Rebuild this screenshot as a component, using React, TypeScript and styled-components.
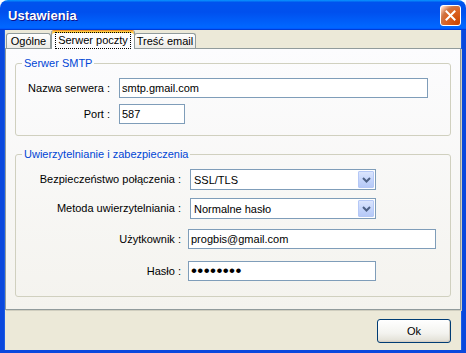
import styled, { createGlobalStyle } from "styled-components";

const GlobalStyle = createGlobalStyle`
  html, body {
    margin: 0;
    padding: 0;
    background: #ffffff;
  }
  body {
    font-family: "Liberation Sans", Arial, sans-serif;
    font-size: 11px;
    color: #000000;
  }
`;

const Window = styled.div`
  width: 466px;
  height: 353px;
  display: flex;
  flex-direction: column;
  border-radius: 8px 8px 0 0;
  overflow: hidden;
`;

const TitleBar = styled.div`
  height: 30px;
  flex-shrink: 0;
  display: flex;
  align-items: center;
  justify-content: space-between;
  padding: 0 5px 0 8px;
  background: linear-gradient(
    180deg,
    #0997ff 0%,
    #0053ee 8%,
    #0050ee 40%,
    #0066ff 88%,
    #0066ff 93%,
    #005bff 95%,
    #003dd7 96%,
    #003dd7 100%
  );
`;

const Title = styled.span`
  font-family: "Liberation Sans", Arial, sans-serif;
  font-weight: bold;
  font-size: 13px;
  color: #ffffff;
  text-shadow: 1px 1px #0f1089;
  letter-spacing: 0.1px;
`;

const CloseButton = styled.div`
  width: 21px;
  height: 21px;
  box-sizing: border-box;
  border: 1px solid #ffffff;
  border-radius: 3px;
  display: flex;
  align-items: center;
  justify-content: center;
  background: radial-gradient(
    circle at 90% 90%,
    #cc4600 0%,
    #dc6527 55%,
    #cd7546 70%,
    #ffccb2 90%,
    #ffffff 100%
  );
`;

const Client = styled.div`
  flex: 1;
  display: flex;
  flex-direction: column;
  background: #ece9d8;
  border-style: solid;
  border-color: #0a48dd;
  border-width: 0 4px 3px 4px;
  box-shadow: inset 1px 0 #1a5ce6, inset -1px 0 #1a5ce6;
`;

const TabStrip = styled.div`
  height: 18px;
  display: flex;
  align-items: flex-end;
  padding-left: 1px;
`;

const Tab = styled.div<{ $active?: boolean; $width: number }>`
  position: relative;
  box-sizing: border-box;
  width: ${(p) => p.$width}px;
  height: ${(p) => (p.$active ? 19 : 15)}px;
  margin-bottom: ${(p) => (p.$active ? -1 : 0)}px;
  margin-left: ${(p) => (p.$active ? 0 : -1)}px;
  z-index: ${(p) => (p.$active ? 2 : 1)};
  display: flex;
  align-items: center;
  justify-content: center;
  border: 1px solid #919b9c;
  border-bottom: none;
  border-radius: 3px 3px 0 0;
  background: ${(p) =>
    p.$active ? "#fcfcfe" : "linear-gradient(#ffffff, #ecebe6)"};
  border-top-color: ${(p) => (p.$active ? "#e68b2c" : "#919b9c")};
  box-shadow: ${(p) => (p.$active ? "inset 0 2px #ffc83c" : "none")};
  padding-top: ${(p) => (p.$active ? 1 : 0)}px;

  &:first-child {
    margin-left: 1px;
  }
`;

const FocusLabel = styled.span`
  outline: 1px dotted #000000;
  outline-offset: 0;
  padding: 1px 2px 1px 2px;
  line-height: 13px;
`;

const Panel = styled.div`
  height: 262px;
  box-sizing: border-box;
  margin: 0 1px;
  padding: 8px 9px 0 9px;
  border: 1px solid #919b9c;
  background: linear-gradient(#fcfcfe, #f4f3ee);
  box-shadow: 1px 1px 0 #d0cebf;
  display: flex;
  flex-direction: column;
  gap: 12px;
`;

const GroupBox = styled.fieldset<{ $padBottom: number }>`
  margin: 0;
  min-width: 0;
  padding: 8px 6px ${(p) => p.$padBottom}px 6px;
  border: 1px solid #d0d0bf;
  border-radius: 3px;
  display: flex;
  flex-direction: column;
`;

const Legend = styled.legend`
  padding: 0 2px;
  color: #0046d5;
  font-size: 11px;
  line-height: 13px;
`;

const Row = styled.div<{ $gap?: number; $height: number }>`
  display: flex;
  align-items: center;
  height: ${(p) => p.$height}px;
  margin-top: ${(p) => p.$gap ?? 0}px;
`;

const Label = styled.label<{ $width: number }>`
  width: ${(p) => p.$width}px;
  flex-shrink: 0;
  text-align: right;
  white-space: nowrap;
  line-height: 13px;
`;

const TextInput = styled.input<{ $width: number; $offset: number }>`
  box-sizing: border-box;
  width: ${(p) => p.$width}px;
  height: 100%;
  margin: 0 0 0 ${(p) => p.$offset}px;
  padding: 0 2px;
  border: 1px solid #7f9db9;
  background: #ffffff;
  font-family: "Liberation Sans", Arial, sans-serif;
  font-size: 11px;
  color: #000000;
  outline: none;
`;

const PasswordInput = styled(TextInput)`
  font-size: 17px;
  letter-spacing: 0.4px;
  padding-left: 2px;
`;

const ComboBox = styled.div<{ $width: number; $offset: number }>`
  box-sizing: border-box;
  width: ${(p) => p.$width}px;
  height: 100%;
  margin-left: ${(p) => p.$offset}px;
  display: flex;
  align-items: center;
  justify-content: space-between;
  padding: 1px 1px 1px 3px;
  border: 1px solid #7f9db9;
  background: #ffffff;
`;

const ComboButton = styled.div`
  box-sizing: border-box;
  width: 16px;
  height: 17px;
  border: 1px solid #b5c8f6;
  border-radius: 1px;
  background: linear-gradient(#dbe5fd, #c2d3fb 60%, #b6c9f7);
  display: flex;
  align-items: center;
  justify-content: center;
`;

const Footer = styled.div`
  flex: 1;
  display: flex;
  justify-content: flex-end;
  align-items: flex-start;
  padding: 9px 11px 0 0;
`;

const Button = styled.button`
  box-sizing: border-box;
  width: 74px;
  height: 24px;
  border: 1px solid #003c74;
  border-radius: 3px;
  background: linear-gradient(#ffffff, #f3f3ef 60%, #e5e3da 90%, #d6d0c5);
  box-shadow: inset -1px -1px #d6d0c5;
  font-family: "Liberation Sans", Arial, sans-serif;
  font-size: 11px;
  color: #000000;
  padding: 0;
`;

function Chevron() {
  return (
    <svg width="9" height="6" viewBox="0 0 9 6">
      <polyline
        points="1,1 4.5,4.5 8,1"
        fill="none"
        stroke="#4d6185"
        strokeWidth="2"
      />
    </svg>
  );
}

function Combo({ value, width, offset }) {
  return (
    <ComboBox $width={width} $offset={offset}>
      <span>{value}</span>
      <ComboButton>
        <Chevron />
      </ComboButton>
    </ComboBox>
  );
}

export default function App() {
  return (
    <>
      <GlobalStyle />
      <Window>
        <TitleBar>
          <Title>Ustawienia</Title>
          <CloseButton>
            <svg width="11" height="11" viewBox="0 0 11 11">
              <path
                d="M1.5 1.5 L9.5 9.5 M9.5 1.5 L1.5 9.5"
                stroke="#ffffff"
                strokeWidth="2"
                strokeLinecap="square"
              />
            </svg>
          </CloseButton>
        </TitleBar>
        <Client>
          <TabStrip>
            <Tab $width={45}>Ogólne</Tab>
            <Tab $width={84} $active>
              <FocusLabel>Serwer poczty</FocusLabel>
            </Tab>
            <Tab $width={62}>Treść email</Tab>
          </TabStrip>
          <Panel>
            <GroupBox $padBottom={11}>
              <Legend>Serwer SMTP</Legend>
              <Row $height={20}>
                <Label $width={88}>Nazwa serwera :</Label>
                <TextInput $width={309} $offset={9} defaultValue="smtp.gmail.com" />
              </Row>
              <Row $height={20} $gap={6}>
                <Label $width={88}>Port :</Label>
                <TextInput $width={66} $offset={9} defaultValue="587" />
              </Row>
            </GroupBox>
            <GroupBox $padBottom={15}>
              <Legend>Uwierzytelnianie i zabezpieczenia</Legend>
              <Row $height={21}>
                <Label $width={159}>Bezpieczeństwo połączenia :</Label>
                <Combo value="SSL/TLS" width={186} offset={9} />
              </Row>
              <Row $height={21} $gap={8}>
                <Label $width={159}>Metoda uwierzytelniania :</Label>
                <Combo value="Normalne hasło" width={186} offset={9} />
              </Row>
              <Row $height={20} $gap={10}>
                <Label $width={159}>Użytkownik :</Label>
                <TextInput $width={248} $offset={7} defaultValue="progbis@gmail.com" />
              </Row>
              <Row $height={20} $gap={12}>
                <Label $width={159}>Hasło :</Label>
                <PasswordInput
                  type="password"
                  $width={188}
                  $offset={7}
                  defaultValue="progbis1"
                />
              </Row>
            </GroupBox>
          </Panel>
          <Footer>
            <Button>Ok</Button>
          </Footer>
        </Client>
      </Window>
    </>
  );
}
